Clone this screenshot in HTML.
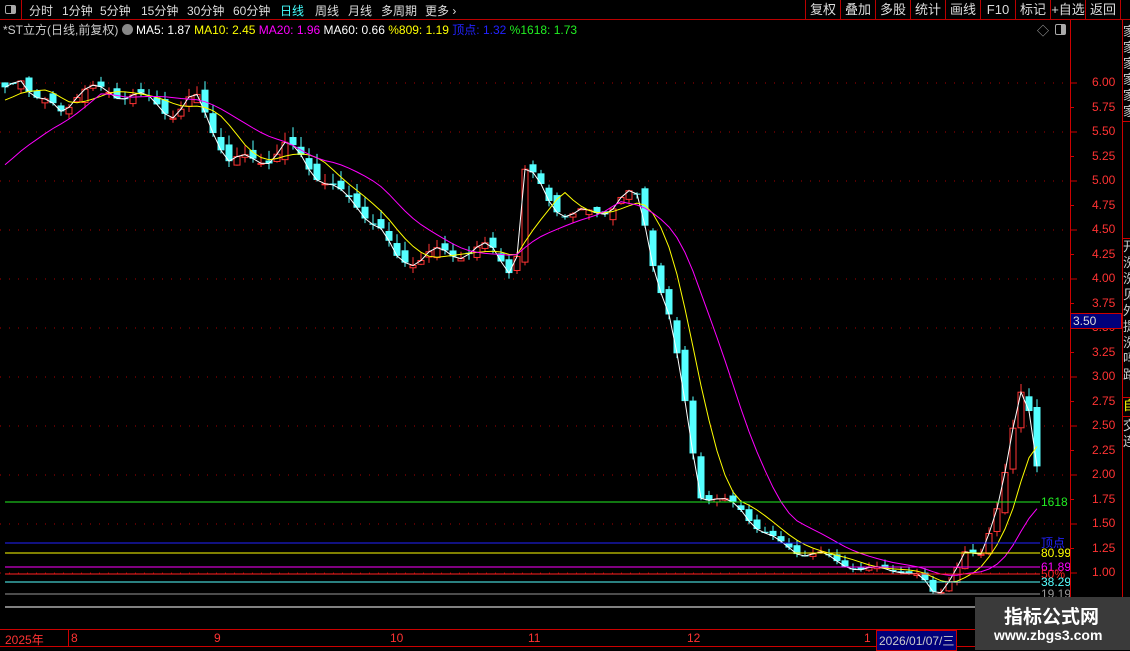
<!DOCTYPE html>
<html><head><meta charset="utf-8">
<style>
*{margin:0;padding:0;box-sizing:border-box}
body{width:1130px;height:650px;background:#000;overflow:hidden;position:relative;font-family:"Liberation Sans","Noto Sans CJK SC",sans-serif;color:#ccc}
.tb{position:absolute;left:0;top:0;width:1130px;height:20px;border-bottom:1px solid #b00;font-size:12px}
.tb span{position:absolute;top:2px;color:#ddd}
.rb{position:absolute;top:0;height:20px;border-left:1px solid #b00;color:#ddd;font-size:13px;text-align:center;line-height:20px}
.info{position:absolute;top:21px;left:3px;font-size:12px;white-space:nowrap}
.axis{position:absolute;left:1070px;top:20px;width:1px;height:610px;background:#c00}
.rcol{position:absolute;left:1122px;top:20px;width:1px;height:610px;background:#c00}
.pl{position:absolute;left:1092px;font-size:12px;color:#f33}
.bot{position:absolute;left:0;top:629px;width:1130px;height:18px;border-top:1px solid #c00;border-bottom:1px solid #c00;font-size:12px;color:#f33}
.bot span{position:absolute;top:1px}
.wm{position:absolute;left:975px;top:597px;width:155px;height:53px;background:#3a3a3a}
.vt{position:absolute;left:1123px;width:7px;color:#ccc;font-size:13px;overflow:hidden;line-height:16px;white-space:pre}
</style></head><body>
<svg id="c" width="1130" height="650" style="position:absolute;left:0;top:0"></svg>
<div class="tb">
<div style="position:absolute;left:0;top:0;width:22px;height:20px;border-right:1px solid #b00"><div style="position:absolute;left:5px;top:5px;width:11px;height:9px;border:1px solid #aaa;border-radius:2px"><div style="position:absolute;right:0;top:0;width:4px;height:7px;background:#aaa"></div></div></div>
<span style="left:29px">分时</span><span style="left:62px">1分钟</span><span style="left:100px">5分钟</span><span style="left:141px">15分钟</span><span style="left:187px">30分钟</span><span style="left:233px">60分钟</span><span style="left:280px;color:#4ff">日线</span><span style="left:315px">周线</span><span style="left:348px">月线</span><span style="left:381px">多周期</span><span style="left:425px">更多 ›</span>
</div>
<div class="rb" style="left:805px;width:35px">复权</div><div class="rb" style="left:840px;width:35px">叠加</div><div class="rb" style="left:875px;width:35px">多股</div><div class="rb" style="left:910px;width:35px">统计</div><div class="rb" style="left:945px;width:35px">画线</div><div class="rb" style="left:980px;width:35px">F10</div><div class="rb" style="left:1015px;width:35px">标记</div><div class="rb" style="left:1050px;width:35px">+自选</div><div class="rb" style="left:1085px;width:36px;border-right:1px solid #b00">返回</div>
<div class="info"><span style="color:#ccc">*ST立方(日线,前复权)</span> <span style="display:inline-block;width:11px;height:11px;border-radius:6px;background:#888;vertical-align:-1px"></span> <span style="color:#fff">MA5: 1.87</span> <span style="color:#ff0">MA10: 2.45</span> <span style="color:#f0f">MA20: 1.96</span> <span style="color:#fff">MA60: 0.66</span> <span style="color:#ff0">%809: 1.19</span> <span style="color:#22f">顶点: 1.32</span> <span style="color:#2e2">%1618: 1.73</span></div>
<div style="position:absolute;left:1037px;top:22px;color:#aaa;font-size:12px">◇</div>
<div style="position:absolute;left:1055px;top:24px;width:11px;height:11px;border:1px solid #aaa;border-radius:2px"><div style="position:absolute;right:0;top:0;width:4px;height:9px;background:#aaa"></div></div>
<div class="axis"></div><div class="rcol"></div>
<div id="pls"></div>
<div style="position:absolute;left:1070px;top:313px;width:52px;height:16px;background:#00007a;border:1px solid #c00;color:#ddd;font-size:12px;padding-left:2px">3.50</div>
<div class="vt" style="top:24px;height:98px;border-bottom:1px solid #c00">家
家
家
家
家
家</div>
<div class="vt" style="top:238px;height:156px;border-top:1px solid #c00">开
洗
洗
见
外
提
洗
吗
路</div>
<div class="vt" style="top:397px;height:20px;color:#ff0;border-top:1px solid #c00;border-bottom:1px solid #c00">自</div>
<div class="vt" style="top:418px;height:42px">交
连</div>
<div class="bot"><span style="left:5px">2025年</span><div style="position:absolute;left:68px;top:0;width:1px;height:16px;background:#c00"></div><span style="left:71px">8</span><span style="left:214px">9</span><span style="left:390px">10</span><span style="left:528px">11</span><span style="left:687px">12</span><span style="left:864px">1</span><span style="left:876px;top:0;background:#00007a;color:#ccc;padding:1px 2px;border:1px solid #c00">2026/01/07/三</span></div>
<div class="wm"><div style="position:absolute;left:29px;top:5px;color:#fff;font-size:19px;font-weight:bold;font-family:'Noto Sans CJK SC',sans-serif">指标公式网</div><div style="position:absolute;left:19px;top:30px;color:#fff;font-size:14px;font-weight:bold">www.zbgs3.com</div></div>
<script>
var Y=function(p){return 573-(p-1)*98;};
var svg=document.getElementById('c'),h='';
for(var p=1;p<=6;p+=0.5){h+='<line x1="0" x2="1068" y1="'+Y(p)+'" y2="'+Y(p)+'" stroke="#a00" stroke-dasharray="1,8"/>';}
var pls='';
for(var p=1;p<=6.001;p+=0.25){var y=Y(p);pls+='<div class="pl" style="top:'+(y-8)+'px">'+p.toFixed(2)+'</div>';h+='<line x1="1070" x2="'+(Math.round(p*4)%2==0?1077:1074)+'" y1="'+y+'" y2="'+y+'" stroke="#c00"/>';}
document.getElementById('pls').innerHTML=pls;
var K=[[5,5.9],[20,6.1],[40,5.8],[60,5.7],[80,5.95],[100,5.9],[130,5.9],[150,5.8],[175,5.7],[195,5.85],[210,5.6],[230,5.2],[250,5.2],[270,5.25],[285,5.35],[300,5.25],[320,5.05],[340,4.85],[360,4.75],[380,4.5],[395,4.2],[410,4.2],[430,4.25],[450,4.25],[470,4.3],[490,4.3],[510,4.12],[518,4.3],[525,5.1],[535,5.0],[550,4.8],[570,4.65],[590,4.65],[610,4.75],[625,4.85],[640,4.8],[650,4.3],[660,3.95],[670,3.6],[680,3.0],[690,2.4],[700,1.8],[720,1.75],[740,1.65],[760,1.45],[780,1.3],[800,1.2],[820,1.2],[840,1.1],[860,1.04],[880,1.04],[900,1.03],[920,0.97],[937,0.75],[950,0.95],[965,1.2],[980,1.15],[990,1.45],[1000,1.8],[1010,2.3],[1020,2.8],[1030,2.6],[1040,1.9]];
function f(x){for(var i=1;i<K.length;i++){if(x<=K[i][0]){var a=K[i-1],b=K[i];return a[1]+(b[1]-a[1])*(x-a[0])/(b[0]-a[0]);}}return K[K.length-1][1];}
var xs=[],cl=[];for(var x=5;x<=1041;x+=8){xs.push(x);cl.push(f(x)+0.07*Math.sin(x*1.7)*Math.min(1,f(x)/3));}
var prev=cl[0]+0.05;
for(var i=0;i<xs.length;i++){var c=cl[i],o=prev+0.06*Math.sin(i*2.3)*Math.min(1,c/3),x=xs[i];
var hi=Math.max(o,c)+Math.abs(0.1*Math.sin(i*3.1))*Math.min(1,c/2),lo=Math.min(o,c)-Math.abs(0.06*Math.cos(i*1.9))*Math.min(1,c/2);
var up=c>=o,col=up?'#f33':'#5ff';
h+='<line x1="'+x+'" x2="'+x+'" y1="'+Y(hi)+'" y2="'+Y(lo)+'" stroke="'+col+'"/>';
var t=Y(Math.max(o,c)),hh=Math.max(1,Y(Math.min(o,c))-t);
if(up)h+='<rect x="'+(x-3)+'" y="'+t+'" width="6" height="'+hh+'" fill="#000" stroke="#f33"/>';else h+='<rect x="'+(x-3.5)+'" y="'+t+'" width="7" height="'+hh+'" fill="#5ff"/>';
prev=c;}
function ma(n,col,pre){var s='';for(var i=0;i<xs.length;i++){var sum=0,k=0;for(var j=i-n+1;j<=i;j++){sum+=(j<0?pre:cl[j]);k++;}s+=(i?'L':'M')+xs[i]+' '+Y(sum/k).toFixed(1);}h+='<path d="'+s+'" fill="none" stroke="'+col+'" stroke-width="1"/>';}
var s='';for(var i=0;i<xs.length;i++)s+=(i?'L':'M')+xs[i]+' '+Y(cl[i]).toFixed(1);h+='<path d="'+s+'" fill="none" stroke="#fff"/>';
ma(6,'#ff0',5.8);ma(13,'#f0f',5.1);
var L=[[502,'#2e2','1618'],[543,'#22f','顶点'],[553,'#ff0','80.99'],[567,'#f0f','61.89'],[574,'#f22','50%'],[582,'#5ff','38.29'],[594,'#999','19.19']];
L.forEach(function(l){h+='<line x1="5" x2="1040" y1="'+l[0]+'" y2="'+l[0]+'" stroke="'+l[1]+'"/><text x="1041" y="'+(l[0]+4)+'" fill="'+l[1]+'" font-size="12" font-family="Liberation Sans,Noto Sans CJK SC,sans-serif">'+l[2]+'</text>';});
h+='<line x1="5" x2="1068" y1="607" y2="607" stroke="#fff"/>';
svg.innerHTML=h;
</script>
</body></html>
